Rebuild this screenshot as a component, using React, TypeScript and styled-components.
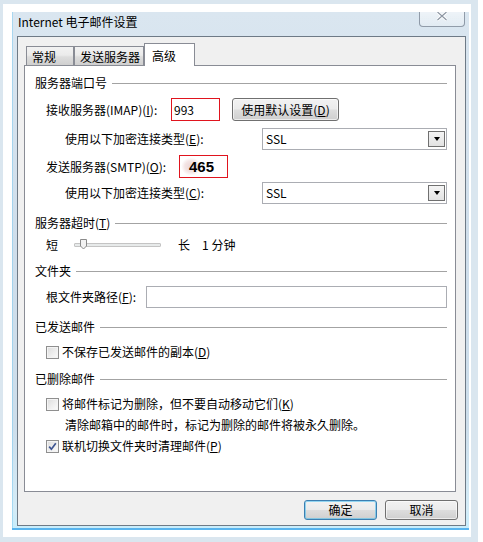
import React from 'react';
import styled, { createGlobalStyle } from 'styled-components';

const GlobalStyle = createGlobalStyle`
  html, body { margin: 0; padding: 0; background: #fff; }
  body {
    width: 483px; height: 542px; overflow: hidden;
    font-family: "Noto Sans CJK SC", "Noto Sans", sans-serif;
    font-size: 12px; color: #000;
  }
  * { box-sizing: border-box; }
  u { text-decoration: underline; text-underline-offset: 1px; }
`;

const Shell = styled.div`
  width: 478px;
  height: 542px;
  border-style: solid;
  border-color: #dae6ef;
  border-width: 4px 7px 5px 3px;
  padding: 8px 2px 7px 9px;
  background: #fff;
`;

const Window = styled.div`
  height: 100%;
  display: flex;
  flex-direction: column;
  padding: 0 3px 4px 5px;
  background: linear-gradient(to bottom, #dae6f0 0%, #cfdeeb 45%, #cddeeb 80%, #d4ecf7 96%, #c9edfb 99%);
  box-shadow: inset 0 -2px 0 #58b4ee, inset 1px 0 0 rgba(120, 200, 240, 0.5);
`;

const TitleBar = styled.div`
  height: 24px;
  display: flex;
  align-items: flex-start;
`;

const Title = styled.div`
  margin: 2px 0 0 1px;
  line-height: 16px;
  font-size: 12px;
`;

const CloseButton = styled.div`
  margin-left: auto;
  margin-right: 1px;
  width: 46px;
  height: 15px;
  border: 1px solid rgba(70, 85, 105, 0.55);
  border-top: none;
  border-radius: 0 0 4px 4px;
  background: linear-gradient(to bottom, rgba(255,255,255,0.55), rgba(255,255,255,0.25));
  display: flex;
  justify-content: center;
  align-items: flex-start;
`;

const Client = styled.div`
  flex: 1;
  display: flex;
  flex-direction: column;
  border: 1px solid #6e7a86;
  background: #f0f0f0;
  padding: 6px 9px 5px 6px;
`;

const TabBar = styled.div`
  height: 23px;
  display: flex;
  align-items: flex-end;
  padding-left: 2px;
  position: relative;
  z-index: 1;
`;

const Tab = styled.div<{ $active?: boolean; $w: number }>`
  width: ${p => p.$w}px;
  height: ${p => (p.$active ? 23 : 19)}px;
  margin-bottom: ${p => (p.$active ? 0 : 1)}px;
  padding-left: ${p => (p.$active ? 7 : 5)}px;
  display: flex;
  align-items: center;
  border: 1px solid #898c95;
  border-bottom: none;
  background: ${p => (p.$active ? '#fff' : 'linear-gradient(to bottom, #f2f2f2 0%, #ebebeb 45%, #dddddd 55%, #cfcfcf 100%)')};
  & + & { margin-left: ${p => (p.$active ? 0 : 1)}px; }
`;

const Panel = styled.div`
  flex: 1;
  margin-top: -1px;
  border: 1px solid #898c95;
  background: #fff;
  padding: 9px 8px 0 10px;
  display: flex;
  flex-direction: column;
`;

const SectionHeader = styled.div<{ $mt?: number }>`
  height: 16px;
  margin-top: ${p => p.$mt ?? 0}px;
  display: flex;
  align-items: center;
  gap: 5px;
  line-height: 16px;
  white-space: nowrap;
  &::after {
    content: '';
    flex: 1;
    height: 1px;
    background: #a3a3a3;
    margin-top: 1px;
  }
`;

const HeaderText = styled.span`
  flex-shrink: 0;
`;

const Row = styled.div<{ $mt?: number; $indent: number; $h?: number }>`
  height: ${p => p.$h ?? 16}px;
  margin-top: ${p => p.$mt ?? 0}px;
  padding-left: ${p => p.$indent}px;
  display: flex;
  align-items: center;
  line-height: 16px;
  white-space: nowrap;
`;

const Label = styled.span<{ $w?: number; $ml?: number }>`
  width: ${p => (p.$w ? `${p.$w}px` : 'auto')};
  margin-left: ${p => p.$ml ?? 0}px;
  flex-shrink: 0;
`;

const PortInput = styled.div<{ $bold?: boolean }>`
  width: 49px;
  height: 23px;
  border: 1px solid #e0141e;
  display: flex;
  align-items: center;
  padding-left: ${p => (p.$bold ? 9 : 2)}px;
  font-weight: ${p => (p.$bold ? 700 : 400)};
  font-size: ${p => (p.$bold ? 15 : 12)}px;
  font-family: ${p => (p.$bold ? '"Liberation Sans", "Noto Sans", sans-serif' : 'inherit')};
  background: ${p => (p.$bold ? 'radial-gradient(ellipse 10px 9px at 11px 50%, #ecd6d6 0%, #f3e4e4 60%, rgba(255,255,255,0) 100%)' : '#fff')};
`;

const PushButton = styled.div<{ $w: number; $h?: number; $default?: boolean; $ml?: number }>`
  width: ${p => p.$w}px;
  height: ${p => p.$h ?? 23}px;
  margin-left: ${p => p.$ml ?? 0}px;
  border: 1px solid ${p => (p.$default ? '#3c7fb1' : '#707070')};
  border-radius: 3px;
  display: flex;
  align-items: center;
  justify-content: center;
  background: linear-gradient(to bottom, #f2f2f2 0%, #ebebeb 48%, #dddddd 52%, #cfcfcf 100%);
  box-shadow: inset 0 0 0 1px ${p => (p.$default ? 'rgba(70, 190, 240, 0.55)' : 'rgba(255,255,255,0.6)')};
  line-height: 16px;
`;

const Select = styled.div`
  width: 186px;
  height: 22px;
  border: 1px solid #abadb3;
  background: #fff;
  display: flex;
  align-items: center;
  justify-content: space-between;
  padding: 0 1px 0 3px;
`;

const DropArrow = styled.div`
  width: 17px;
  height: 16px;
  border: 1px solid #707070;
  background: linear-gradient(to bottom, #f4f4f4, #e2e2e2);
  display: flex;
  align-items: center;
  justify-content: center;
  &::after {
    content: '';
    border-left: 3.5px solid transparent;
    border-right: 3.5px solid transparent;
    border-top: 4px solid #000;
  }
`;

const TextInput = styled.div`
  flex: 1;
  height: 22px;
  border: 1px solid #abadb3;
  background: #fff;
`;

const Slider = styled.div`
  position: relative;
  width: 87px;
  height: 16px;
  margin: 0 17px 0 16px;
  display: flex;
  align-items: center;
`;

const Track = styled.div`
  width: 100%;
  height: 4px;
  border: 1px solid #c4c4c4;
  border-radius: 1px;
  background: #e7eaea;
`;

const Thumb = styled.svg`
  position: absolute;
  left: 6px;
  top: 2px;
`;

const Check = styled.div`
  width: 13px;
  height: 13px;
  border: 1px solid #8f8f8f;
  background: linear-gradient(135deg, #dcdcdc 0%, #f0f0f0 60%, #fbfbfb 100%);
  box-shadow: inset 0 0 0 1px #f4f4f4;
  margin-right: 3px;
  display: flex;
  align-items: center;
  justify-content: center;
`;

const ButtonRow = styled.div`
  height: 20px;
  margin-top: 8px;
  margin-right: -2px;
  display: flex;
  justify-content: flex-end;
  gap: 8px;
`;

const CheckBox = ({ checked }: { checked?: boolean }) => (
  <Check>
    {checked && (
      <svg width="9" height="9" viewBox="0 0 9 9">
        <path d="M1.2 4.6 L3.4 7.2 L7.8 1.2" fill="none" stroke="#3d5491" strokeWidth="1.7" />
      </svg>
    )}
  </Check>
);

export default function App() {
  return (
    <>
      <GlobalStyle />
      <Shell>
        <Window>
          <TitleBar>
            <Title>Internet 电子邮件设置</Title>
            <CloseButton>
              <svg width="12" height="9" viewBox="0 0 12 9">
                <path d="M1.5 0 L10.5 8 M10.5 0 L1.5 8" stroke="#fff" strokeWidth="3" />
                <path d="M1.5 0 L10.5 8 M10.5 0 L1.5 8" stroke="#8c96a3" strokeWidth="1.2" />
              </svg>
            </CloseButton>
          </TitleBar>
          <Client>
            <TabBar>
              <Tab $w={48}>常规</Tab>
              <Tab $w={70}>发送服务器</Tab>
              <Tab $w={51} $active>高级</Tab>
            </TabBar>
            <Panel>
              <SectionHeader><HeaderText>服务器端口号</HeaderText></SectionHeader>
              <Row $mt={7} $indent={11} $h={23}>
                <Label $w={125}>接收服务器(IMAP)(<u>I</u>):</Label>
                <PortInput>993</PortInput>
                <PushButton $w={107} $ml={12}>使用默认设置(<u>D</u>)</PushButton>
              </Row>
              <Row $mt={7} $indent={30} $h={22}>
                <Label $w={197}>使用以下加密连接类型(<u>E</u>):</Label>
                <Select>SSL<DropArrow /></Select>
              </Row>
              <Row $mt={5} $indent={11} $h={23}>
                <Label $w={133}>发送服务器(SMTP)(<u>O</u>):</Label>
                <PortInput $bold>465</PortInput>
              </Row>
              <Row $mt={4} $indent={30} $h={22}>
                <Label $w={197}>使用以下加密连接类型(<u>C</u>):</Label>
                <Select>SSL<DropArrow /></Select>
              </Row>

              <SectionHeader $mt={11}><HeaderText>服务器超时(<u>T</u>)</HeaderText></SectionHeader>
              <Row $mt={6} $indent={11}>
                <Label>短</Label>
                <Slider>
                  <Track />
                  <Thumb width="8" height="11" viewBox="0 0 8 11">
                    <path d="M0.5 0.5 H6.5 V7 L3.5 10 L0.5 7 Z" fill="#f2f2f2" stroke="#8a8a8a" />
                  </Thumb>
                </Slider>
                <Label>长</Label>
                <Label $ml={12}>1 分钟</Label>
              </Row>

              <SectionHeader $mt={10}><HeaderText>文件夹</HeaderText></SectionHeader>
              <Row $mt={7} $indent={11} $h={22}>
                <Label $w={100}>根文件夹路径(<u>F</u>):</Label>
                <TextInput />
              </Row>

              <SectionHeader $mt={11}><HeaderText>已发送邮件</HeaderText></SectionHeader>
              <Row $mt={9} $indent={11}>
                <CheckBox />
                <Label>不保存已发送邮件的副本(<u>D</u>)</Label>
              </Row>

              <SectionHeader $mt={11}><HeaderText>已删除邮件</HeaderText></SectionHeader>
              <Row $mt={9} $indent={11}>
                <CheckBox />
                <Label>将邮件标记为删除，但不要自动移动它们(<u>K</u>)</Label>
              </Row>
              <Row $mt={5} $indent={30}>
                <Label>清除邮箱中的邮件时，标记为删除的邮件将被永久删除。</Label>
              </Row>
              <Row $mt={5} $indent={11}>
                <CheckBox checked />
                <Label>联机切换文件夹时清理邮件(<u>P</u>)</Label>
              </Row>
            </Panel>
            <ButtonRow>
              <PushButton $w={73} $h={20} $default>确定</PushButton>
              <PushButton $w={73} $h={20}>取消</PushButton>
            </ButtonRow>
          </Client>
        </Window>
      </Shell>
    </>
  );
}
